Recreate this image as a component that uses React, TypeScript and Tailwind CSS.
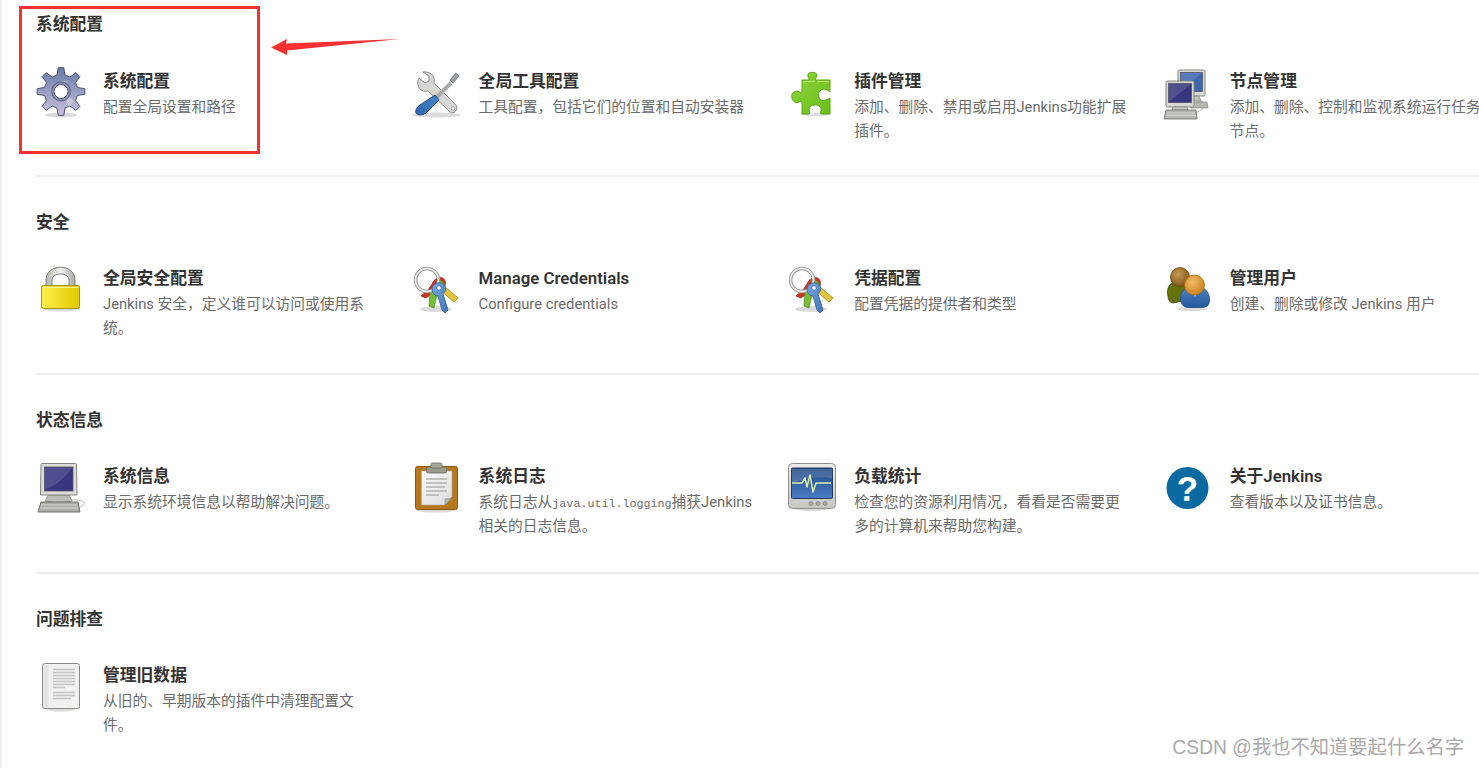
/**
 * Jenkins "Manage Jenkins" page with the CSDN annotation on top.
 */

import type { ReactNode } from "react";

const FONT = "font-['Roboto','Noto_Sans_CJK_SC',sans-serif]";

/** Builds the outline of a toothed gear around (cx, cy). */
function gearPath(cx: number, cy: number, outer: number, root: number, teeth: number): string {
    const pts: string[] = [];
    const step = (Math.PI * 2) / teeth;
    for (let i = 0; i < teeth; i++) {
        const a = -Math.PI / 2 + i * step;
        const at = (r: number, off: number) =>
            `${(cx + r * Math.cos(a + off)).toFixed(2)} ${(cy + r * Math.sin(a + off)).toFixed(2)}`;
        pts.push(at(root, -step * 0.3), at(outer, -step * 0.15), at(outer, step * 0.15), at(root, step * 0.3));
    }
    return `M${pts.join("L")}Z`;
}

function Svg({ children }: { children: ReactNode }) {
    return (
        <svg width="48" height="48" viewBox="0 0 48 48" className="shrink-0 overflow-visible" aria-hidden="true">
            {children}
        </svg>
    );
}

function Shadow({ cx, cy, rx, ry = 2.5 }: { cx: number; cy: number; rx: number; ry?: number }) {
    return <ellipse cx={cx} cy={cy} rx={rx} ry={ry} fill="#000" opacity="0.14" />;
}

function GearIcon() {
    return (
        <Svg>
            <defs>
                <linearGradient id="gear" x1="0" y1="0" x2="0" y2="1">
                    <stop offset="0" stopColor="#6478a8" />
                    <stop offset="0.5" stopColor="#9a9fc2" />
                    <stop offset="1" stopColor="#c9c0dc" />
                </linearGradient>
            </defs>
            <Shadow cx={25} cy={46} rx={16} />
            <path d={gearPath(25, 22.5, 24, 17, 8)} fill="url(#gear)" stroke="#4c5270" strokeWidth="1" strokeLinejoin="round" />
            <path d="M12 24 L20 18 L25 12 L33 11 L30 17 L22 21Z" fill="#fff" opacity="0.18" />
            <path d="M30 25 L38 32 L33 38 L30 31Z" fill="#fff" opacity="0.3" />
            <circle cx="25" cy="22.5" r="9.5" fill="#8d93b4" stroke="#5a607f" strokeWidth="1" />
            <circle cx="25" cy="22.5" r="7" fill="#fff" stroke="#4e5370" strokeWidth="1" />
        </Svg>
    );
}

function ToolsIcon() {
    return (
        <Svg>
            <defs>
                <linearGradient id="handle" x1="0" y1="1" x2="1" y2="0">
                    <stop offset="0" stopColor="#2f68ad" />
                    <stop offset="1" stopColor="#4a86c6" />
                </linearGradient>
            </defs>
            <Shadow cx={25} cy={46} rx={24} ry={2.5} />
            <path
                d="M7 9 L13 14 L17 12 L17 7 L11 3 C18 2 24 7 22 14 L44 36 C47 40 42 46 38 43 L16 22 C9 24 3 17 7 9Z"
                fill="#d6d6d3"
                stroke="#8a8a86"
                strokeWidth="1"
                strokeLinejoin="round"
            />
            <circle cx="41" cy="39.5" r="1.8" fill="#fff" stroke="#888" strokeWidth="0.7" />
            <path d="M39 14 L22 31" stroke="#a9aca8" strokeWidth="4" />
            <path d="M38 11 L44 4 L47 7 L41 14Z" fill="#9aa3aa" stroke="#70767b" strokeWidth="0.8" />
            <path
                d="M23 26 L27 31 L14 44 C10 47 5 46 4 44 C3 41 5 38 8 36Z"
                fill="url(#handle)"
                stroke="#1f4a80"
                strokeWidth="1"
                strokeLinejoin="round"
            />
        </Svg>
    );
}

function PuzzleIcon() {
    return (
        <Svg>
            <defs>
                <linearGradient id="puzzle" x1="0" y1="0" x2="1" y2="1">
                    <stop offset="0" stopColor="#8ed63a" />
                    <stop offset="1" stopColor="#6cbd1c" />
                </linearGradient>
            </defs>
            <Shadow cx={28} cy={45.5} rx={14} ry={1.5} />
            <path
                d="M15 11 H22 C23 10 20 8 21 5.5 C22 3 28 2.5 29.5 5 C31 8 27 10 29 11 H43 V23 C41 21 37 19 34 21 C30 24 31 30 35 31.5 C38 32 41 30 43 29 V45 H34 C32 44 36 41 33 37.5 C30 35 24 35.5 22.5 38.5 C21 41 24 44 22 45 H15 V33 C13 31 12 34 9 33.5 C6 33 4 29 5 25.5 C6 22 11 21 13 23.5 C14 24 15 24 15 22Z"
                fill="url(#puzzle)"
                stroke="#5ca315"
                strokeWidth="1"
                strokeLinejoin="round"
            />
            <path d="M16.5 12.5 H28 M30 12.5 H41.5" stroke="#bdf07a" strokeWidth="1" />
        </Svg>
    );
}

function Monitor({ x, y, w, h, screen }: { x: number; y: number; w: number; h: number; screen: string }) {
    return (
        <g>
            <rect x={x} y={y} width={w} height={h} rx="1.5" fill="#d8d8d5" stroke="#85857f" strokeWidth="1" />
            <rect x={x + 2.5} y={y + 2.5} width={w - 5} height={h - 7} fill={screen} stroke="#4a4a60" strokeWidth="0.7" />
            <path d={`M${x + 3} ${y + h - 5} L${x + w - 3} ${y + 3} V${y + 3} H${x + 3}Z`} fill="#fff" opacity="0.13" />
        </g>
    );
}

function NodesIcon() {
    return (
        <Svg>
            <path d="M26 45 C38 44 42 38 41 34 C38 30 36 33 33 34" fill="none" stroke="#aaa" strokeWidth="0.8" />
            <Monitor x={15} y={1} w={27} h={26} screen="#3d68ae" />
            <path d="M23 27 H36 L38 32 H24Z" fill="#bdbdb9" stroke="#85857f" strokeWidth="0.7" />
            <path d="M26 33 H44 L45 39 H28Z" fill="#b6b6b2" stroke="#85857f" strokeWidth="0.7" />
            <Monitor x={3} y={12} w={28} h={26} screen="#37367f" />
            <path d="M10 38 H24 L25 41 H9Z" fill="#c9c9c5" stroke="#85857f" strokeWidth="0.7" />
            <path d="M3 41 H33 L34 50 H1Z" fill="#b4b4b0" stroke="#6e6e68" strokeWidth="0.8" />
            <path d="M4 44 H32 M3.5 46.5 H32.5" stroke="#e0e0dc" strokeWidth="0.8" />
        </Svg>
    );
}

function LockIcon() {
    return (
        <Svg>
            <defs>
                <linearGradient id="lock" x1="0" y1="0" x2="1" y2="0">
                    <stop offset="0" stopColor="#fff04a" />
                    <stop offset="1" stopColor="#e2c800" />
                </linearGradient>
                <linearGradient id="shackle" x1="0" y1="0" x2="1" y2="0">
                    <stop offset="0" stopColor="#b5b5b2" />
                    <stop offset="0.5" stopColor="#f0f0ee" />
                    <stop offset="1" stopColor="#a8a8a5" />
                </linearGradient>
            </defs>
            <Shadow cx={25} cy={43.5} rx={16} ry={2} />
            <path
                d="M10 20 V14 C10 -3 39 -3 39 14 V20 H33 V14 C33 6 16 6 16 14 V20Z"
                fill="url(#shackle)"
                stroke="#7e7e7a"
                strokeWidth="1"
            />
            <rect x="5.5" y="19.5" width="38" height="23" rx="2" fill="url(#lock)" stroke="#a89500" strokeWidth="1" />
            <path d="M7 21.5 H42" stroke="#fff9a8" strokeWidth="1" />
        </Svg>
    );
}

function KeysIcon({ id }: { id: string }) {
    return (
        <Svg>
            <Shadow cx={24} cy={43} rx={16} ry={3} />
            <path d="M32 20 L46 32 L42 36 L28 24Z" fill="#e0c63d" stroke="#9c8518" strokeWidth="0.8" />
            <path d="M20 18 C24 8 36 10 33 20 L25 24 L14 32 L9 30 L16 24Z" fill="#d23226" stroke="#8f1d14" strokeWidth="0.7" />
            <path d="M22 21 C24 12 34 13 32 22 L26 25 L22 42 L17 40 L18 26Z" fill="#74bd35" stroke="#4e8a1e" strokeWidth="0.7" />
            <circle cx="15" cy="14" r="11.5" fill="none" stroke="#8f8f8c" strokeWidth="3.4" />
            <circle cx="15" cy="14" r="11.5" fill="none" stroke="#e9e9e7" strokeWidth="1.8" />
            <path
                d={"M20 24 C19 17 30 14 33 20 C35 24 32 27 31 28 L36 44 L33 47 L30 44 L26 30 C23 30 21 28 20 24Z"}
                fill={`url(#${id})`}
                stroke="#2c5c96"
                strokeWidth="0.8"
            />
            <defs>
                <linearGradient id={id} x1="0" y1="0" x2="1" y2="1">
                    <stop offset="0" stopColor="#7aa6da" />
                    <stop offset="1" stopColor="#3e76b8" />
                </linearGradient>
            </defs>
            <circle cx="27" cy="22" r="2.2" fill="#fff" stroke="#2c5c96" strokeWidth="0.6" />
        </Svg>
    );
}

function UsersIcon() {
    return (
        <Svg>
            <defs>
                <radialGradient id="head1" cx="0.4" cy="0.35" r="0.7">
                    <stop offset="0" stopColor="#c79a52" />
                    <stop offset="1" stopColor="#7c5316" />
                </radialGradient>
                <radialGradient id="head2" cx="0.4" cy="0.35" r="0.7">
                    <stop offset="0" stopColor="#f2bb66" />
                    <stop offset="1" stopColor="#cb7f18" />
                </radialGradient>
                <linearGradient id="coat" x1="0" y1="0" x2="0" y2="1">
                    <stop offset="0" stopColor="#4f83c2" />
                    <stop offset="1" stopColor="#235a9d" />
                </linearGradient>
            </defs>
            <Shadow cx={29} cy={43} rx={15} ry={2} />
            <path d="M5 30 C3 22 7 17 12 16 H21 C28 18 30 24 30 33 L10 37 C6 36 5 33 5 30Z" fill="#67710c" stroke="#434a06" strokeWidth="0.8" />
            <circle cx="17" cy="11" r="9.5" fill="url(#head1)" stroke="#6a4510" strokeWidth="0.8" />
            <path d="M17.5 33 C17 25 22 22 27 21 H37 C43 22 47 28 46.5 35 C46 40 43 41.5 38 41.5 H26 C21 41.5 18 39 17.5 33Z" fill="url(#coat)" stroke="#1d4a82" strokeWidth="0.8" />
            <path d="M29 22 L32 31 L35 22Z" fill="#f2f2f2" />
            <circle cx="31.5" cy="19" r="10" fill="url(#head2)" stroke="#b06d12" strokeWidth="0.8" />
        </Svg>
    );
}

function ComputerIcon() {
    return (
        <Svg>
            <path d="M36 36 C46 35 52 39 46 42 L42 44" fill="none" stroke="#aaa" strokeWidth="0.9" />
            <path d="M12 31 H33 L36 37 C30 39 15 39 9 37Z" fill="#bcbcb8" stroke="#85857f" strokeWidth="0.8" />
            <path d="M6 -0.5 H39 C40 -0.5 40.5 0 40.5 1 L41 31 H4.5 L5 1 C5 0 5.2 -0.5 6 -0.5Z" fill="#dcdcd9" stroke="#85857f" strokeWidth="1" />
            <rect x="8.5" y="3" width="28.5" height="24" fill="#37367f" stroke="#55556a" strokeWidth="0.8" />
            <path d="M9 25 C19 23 29 14 36.5 3.5 H9Z" fill="#fff" opacity="0.12" />
            <path d="M5 38 H42 L44 48 H2Z" fill="#adada9" stroke="#67675f" strokeWidth="0.9" />
            <path d="M5 41 H41 M4.5 44 H42" stroke="#dededa" strokeWidth="0.9" />
        </Svg>
    );
}

function ClipboardIcon() {
    return (
        <Svg>
            <defs>
                <linearGradient id="paper" x1="0" y1="0" x2="1" y2="1">
                    <stop offset="0" stopColor="#fafafa" />
                    <stop offset="1" stopColor="#dcdcdc" />
                </linearGradient>
            </defs>
            <Shadow cx={24} cy={46.5} rx={19} ry={2} />
            <rect x="3.5" y="2.5" width="42" height="43" rx="2" fill="#b5781f" stroke="#8a5a14" strokeWidth="1" />
            <path d="M9.5 7 H40 V33 L33 41 H9.5Z" fill="url(#paper)" stroke="#aaa" strokeWidth="0.5" />
            <path d="M33 41 L40 33 C38 36 34 34 33 35Z" fill="#b9b9b6" stroke="#888" strokeWidth="0.6" />
            <path d="M14 15 H35 M14 19 H35 M14 23 H33 M14 27 H35 M14 31 H27" stroke="#b3b3b0" strokeWidth="1.4" />
            <rect x="14.5" y="3" width="20" height="6" rx="1.5" fill="#9a9a8c" stroke="#6a6a5e" strokeWidth="0.8" />
            <rect x="19" y="-1" width="11" height="5" rx="1.5" fill="#a8a89a" stroke="#6a6a5e" strokeWidth="0.8" />
        </Svg>
    );
}

function LoadIcon() {
    return (
        <Svg>
            <defs>
                <linearGradient id="case" x1="0" y1="0" x2="0" y2="1">
                    <stop offset="0" stopColor="#eeeeec" />
                    <stop offset="1" stopColor="#c6c6c2" />
                </linearGradient>
                <linearGradient id="scope" x1="0" y1="0" x2="0" y2="1">
                    <stop offset="0" stopColor="#234a85" />
                    <stop offset="1" stopColor="#4b7cc4" />
                </linearGradient>
            </defs>
            <Shadow cx={24} cy={45} rx={16} ry={2} />
            <rect x="1.5" y="-0.5" width="47" height="45" rx="4" fill="url(#case)" stroke="#8f8f8b" strokeWidth="1" />
            <rect x="4.5" y="4" width="41" height="30.5" rx="1" fill="url(#scope)" stroke="#263a5e" strokeWidth="1" />
            <path d="M5 5 H45 V14 C30 12 18 14 5 19Z" fill="#fff" opacity="0.14" />
            <path
                d="M5 19 H15 L18 14 L20 23 L23 11 L26 28 L29 19 H44"
                fill="none"
                stroke="#d8f0b0"
                strokeWidth="1.5"
                strokeLinejoin="round"
            />
            <circle cx="24" cy="39.5" r="2" fill="#aaa" stroke="#7e7e7a" strokeWidth="0.7" />
            <circle cx="31" cy="39.5" r="2" fill="#aaa" stroke="#7e7e7a" strokeWidth="0.7" />
            <circle cx="38" cy="39.5" r="2" fill="#aaa" stroke="#7e7e7a" strokeWidth="0.7" />
        </Svg>
    );
}

function HelpIcon() {
    return (
        <Svg>
            <circle cx="24.5" cy="24" r="21" fill="#0b6aa2" />
            <text
                x="24.5"
                y="36.5"
                textAnchor="middle"
                fontSize="35"
                fontWeight="700"
                fontFamily="'Liberation Sans', sans-serif"
                fill="#fff"
            >
                ?
            </text>
        </Svg>
    );
}

function DocIcon() {
    return (
        <Svg>
            <Shadow cx={25} cy={46.5} rx={14} ry={2} />
            <rect x="6.5" y="0.5" width="37" height="45" rx="2" fill="#f1f1f0" stroke="#8a8a88" strokeWidth="1" />
            <rect x="7.5" y="2" width="5" height="43" fill="#e4e4e3" />
            <path
                d="M17 6.5 H39 M17 9.5 H39 M17 12.5 H39 M17 15.5 H39 M17 18.5 H39 M17 21.5 H39 M17 24.5 H29 M17 29.5 H39 M17 32.5 H39 M17 35.5 H35"
                stroke="#c4c4c2"
                strokeWidth="1.6"
            />
        </Svg>
    );
}

interface Item {
    title: string;
    desc: ReactNode;
    icon: ReactNode;
}

interface Section {
    heading: string;
    /** Spacing of the section; the reference's rows are not on an even pitch. */
    top: string;
    grid: string;
    items: Item[];
}

const sections: Section[] = [
    {
        heading: "系统配置",
        top: "pt-3",
        grid: "mt-[33px] pb-[33px]",
        items: [
            { title: "系统配置", desc: "配置全局设置和路径", icon: <GearIcon /> },
            { title: "全局工具配置", desc: "工具配置，包括它们的位置和自动安装器", icon: <ToolsIcon /> },
            { title: "插件管理", desc: "添加、删除、禁用或启用Jenkins功能扩展插件。", icon: <PuzzleIcon /> },
            { title: "节点管理", desc: "添加、删除、控制和监视系统运行任务的节点。", icon: <NodesIcon /> },
        ],
    },
    {
        heading: "安全",
        top: "border-t-2 border-[#eceef0] pt-[33px]",
        grid: "mt-[32px] pb-[34px]",
        items: [
            { title: "全局安全配置", desc: "Jenkins 安全，定义谁可以访问或使用系统。", icon: <LockIcon /> },
            { title: "Manage Credentials", desc: "Configure credentials", icon: <KeysIcon id="key-a" /> },
            { title: "凭据配置", desc: "配置凭据的提供者和类型", icon: <KeysIcon id="key-b" /> },
            { title: "管理用户", desc: "创建、删除或修改 Jenkins 用户", icon: <UsersIcon /> },
        ],
    },
    {
        heading: "状态信息",
        top: "border-t-2 border-[#eceef0] pt-[33px]",
        grid: "mt-[32px] pb-[35px]",
        items: [
            { title: "系统信息", desc: "显示系统环境信息以帮助解决问题。", icon: <ComputerIcon /> },
            {
                title: "系统日志",
                desc: (
                    <>
                        系统日志从
                        <code className="font-['Liberation_Mono','Noto_Sans_CJK_SC',monospace] text-[11.7px] leading-none">java.util.logging</code>
                        捕获Jenkins相关的日志信息。
                    </>
                ),
                icon: <ClipboardIcon />,
            },
            { title: "负载统计", desc: "检查您的资源利用情况，看看是否需要更多的计算机来帮助您构建。", icon: <LoadIcon /> },
            { title: "关于Jenkins", desc: "查看版本以及证书信息。", icon: <HelpIcon /> },
        ],
    },
    {
        heading: "问题排查",
        top: "border-t-2 border-[#eceef0] pt-[33px]",
        grid: "mt-[32px] pb-[34px]",
        items: [{ title: "管理旧数据", desc: "从旧的、早期版本的插件中清理配置文件。", icon: <DocIcon /> }],
    },
];

export default function App() {
    return (
        <div className={`relative h-[768px] w-[1479px] overflow-hidden border-l-2 border-[#eeeeee] bg-white pl-[34px] ${FONT}`}>
            {sections.map((section) => (
                <section key={section.heading} className={section.top}>
                    <h2 className="h-6 text-[16.8px] leading-6 font-bold text-[#333]">{section.heading}</h2>
                    <div className={`grid w-[1510px] grid-cols-[repeat(4,375.6px)] ${section.grid}`}>
                        {section.items.map((item) => (
                            <div key={item.title} className="flex h-[73px] gap-[19px]">
                                {item.icon}
                                <div className="w-[276px] shrink-0">
                                    <div className="h-6 text-[16.8px] leading-6 font-semibold text-[#333]">{item.title}</div>
                                    <div className="mt-[2px] text-[14.75px] leading-6 text-[#6b6b6b]">{item.desc}</div>
                                </div>
                            </div>
                        ))}
                    </div>
                </section>
            ))}

            {/* annotation added on top of the screenshot */}
            <div className="absolute top-[6px] left-[17px] h-[148px] w-[241px] border-[3px] border-[#f73131]" />
            <svg className="absolute top-[35px] left-[266px]" width="136" height="24" viewBox="268 35 136 24" aria-hidden="true">
                <polygon points="271,47.5 287,39 286,43.5 400,39 287,50.5 287,55" fill="#f73131" />
            </svg>
            <div className="absolute top-[736px] right-[15px] font-['Liberation_Sans','Noto_Sans_CJK_SC',sans-serif] text-[19.3px] leading-6 text-[#a9a9a9]">
                CSDN @我也不知道要起什么名字
            </div>
        </div>
    );
}
